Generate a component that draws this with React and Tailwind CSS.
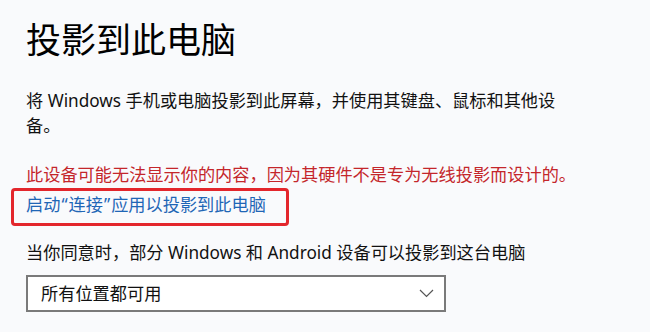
export default function App() {
  return (
    <div
      className="min-h-screen w-[650px] h-[332px] overflow-hidden bg-[#f9fafc] pl-[26px] text-[#111]"
      style={{ fontFamily: '"Noto Sans", "Noto Sans CJK SC", sans-serif' }}
    >
      <h1 className="pt-[18px] text-[35px] leading-[44px] font-normal text-black">投影到此电脑</h1>

      <p className="mt-[26px] w-[548px] text-[17.2px] leading-[25px]">
        将 Windows 手机或电脑投影到此屏幕，并使用其键盘、鼠标和其他设备。
      </p>

      <p className="mt-[24px] text-[17.2px] leading-[25px] text-[#c4262b] whitespace-nowrap">
        此设备可能无法显示你的内容，因为其硬件不是专为无线投影而设计的。
      </p>

      <div className="mt-[5px]">
        <span className="relative inline-block text-[17.2px] leading-[25px] text-[#1f66b6] whitespace-nowrap">
          启动<span className="px-[1px]">“</span>连接<span className="px-[1px]">”</span>应用以投影到此电脑
          <span className="absolute left-[-15px] top-[-4px] h-[38px] w-[278px] rounded-[4px] border-[3px] border-[#e3262c]" />
        </span>
      </div>

      <p className="mt-[23px] text-[17.2px] leading-[25px] whitespace-nowrap">
        当你同意时，部分 Windows 和 Android 设备可以投影到这台电脑
      </p>

      <div className="mt-[10px] flex h-[37px] w-[420px] items-center justify-between border-2 border-[#7a7a7a] bg-white pl-[13px] pr-[10px]">
        <span className="text-[17.2px] leading-[25px]">所有位置都可用</span>
        <svg width="15" height="9" viewBox="0 0 15 9" fill="none">
          <path d="M1 1L7.5 7.5L14 1" stroke="#555" strokeWidth="1.2" />
        </svg>
      </div>
    </div>
  );
}
